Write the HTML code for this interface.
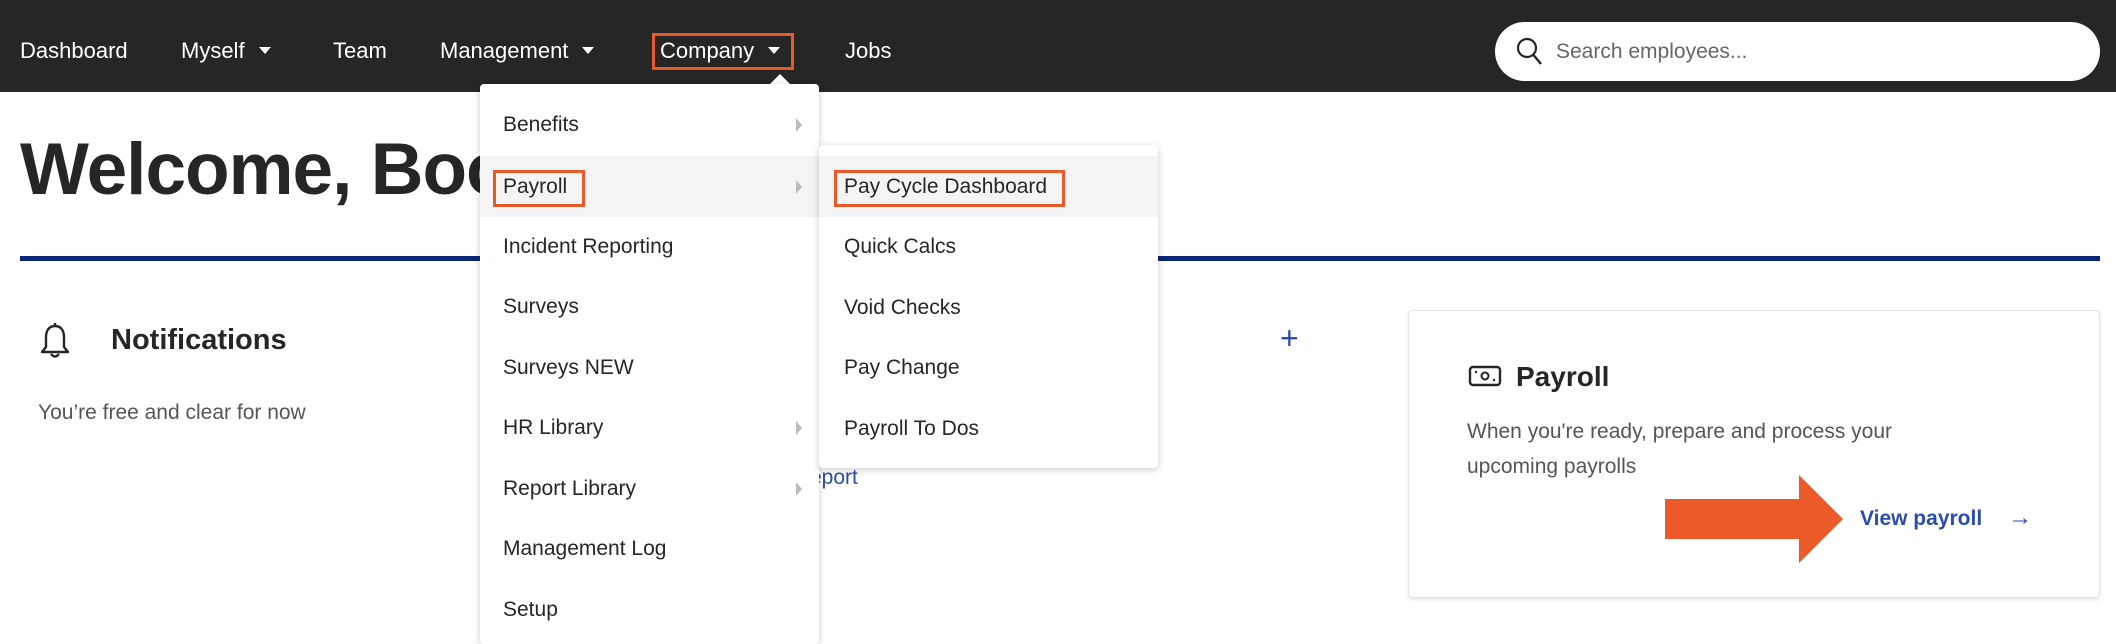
<!DOCTYPE html>
<html><head><meta charset="utf-8">
<style>
*{margin:0;padding:0;box-sizing:border-box}
body{width:2116px;height:628px;overflow:hidden;background:#fff;font-family:"Liberation Sans",sans-serif;color:#262626;position:relative}
.abs{position:absolute;white-space:nowrap}
.nav{position:absolute;left:0;top:0;width:2116px;height:92px;background:#262626}
.ni{position:absolute;top:36px;color:#fff;font-size:22px;line-height:30px}
.caret{display:inline-block;width:0;height:0;border-left:6px solid transparent;border-right:6px solid transparent;border-top:7px solid #fff;vertical-align:middle;margin-left:14px;position:relative;top:-2px}
.search{position:absolute;left:1495px;top:22px;width:605px;height:59px;background:#fff;border-radius:30px}
.menu{position:absolute;background:#fff;box-shadow:0 2px 8px rgba(0,0,0,.2);border-radius:4px}
.mi{position:absolute;left:0;right:0;height:61px;font-size:21px;line-height:61px;padding-left:23px;color:#262626}
.chev{position:absolute;right:17px;top:24px;width:0;height:0;border-top:7px solid transparent;border-bottom:7px solid transparent;border-left:6px solid #bbb}
.box{position:absolute;border:3px solid #e85a2a}
</style></head><body>
<div class="nav"></div>
<div class="ni" style="left:20px">Dashboard</div>
<div class="ni" style="left:181px">Myself<span class="caret"></span></div>
<div class="ni" style="left:333px">Team</div>
<div class="ni" style="left:440px">Management<span class="caret"></span></div>
<div class="ni" style="left:660px">Company<span class="caret"></span></div>
<div class="box" style="left:652px;top:33px;width:142px;height:37px"></div>
<div class="ni" style="left:845px">Jobs</div>
<div class="search">
<svg class="abs" style="left:20px;top:14px" width="30" height="32" viewBox="0 0 30 32"><circle cx="12" cy="12" r="9" fill="none" stroke="#262626" stroke-width="2.2"/><path d="M18.5 19 L26 28" stroke="#262626" stroke-width="2.4"/></svg>
<div class="abs" style="left:61px;top:18px;font-size:21px;color:#666">Search employees...</div>
</div>

<div class="abs" style="left:20px;top:128px;font-size:73px;font-weight:bold;letter-spacing:-1px;color:#262626">Welcome, Boo</div>
<div class="abs" style="left:20px;top:256px;width:2080px;height:5px;background:#0a2678"></div>

<svg class="abs" style="left:38px;top:322px" width="34" height="40" viewBox="0 0 34 40"><path d="M17 4 C10 4 8 10 8 15 V25 L4 30 H30 L26 25 V15 C26 10 24 4 17 4 Z" fill="none" stroke="#262626" stroke-width="2.4" stroke-linejoin="round"/><path d="M13 32 Q17 37 21 32" fill="none" stroke="#262626" stroke-width="2.4"/><path d="M17 1V4" stroke="#262626" stroke-width="2.4"/></svg>
<div class="abs" style="left:111px;top:324px;font-size:29px;font-weight:bold">Notifications</div>
<div class="abs" style="left:38px;top:401px;font-size:21px;color:#555">You’re free and clear for now</div>
<div class="abs" style="left:1280px;top:320px;font-size:32px;color:#2a4bb0">+</div>
<div class="abs" style="left:810px;top:466px;font-size:21px;color:#2a4bb0">eport</div>

<div class="abs" style="left:1408px;top:310px;width:692px;height:288px;border:1px solid #e3e3e3;border-radius:4px;box-shadow:0 2px 4px rgba(0,0,0,.1)"></div>
<svg class="abs" style="left:1468px;top:364px" width="34" height="24" viewBox="0 0 34 24"><rect x="2" y="3" width="30" height="18" rx="3" fill="none" stroke="#262626" stroke-width="2.4"/><circle cx="17" cy="12" r="3.5" fill="none" stroke="#262626" stroke-width="2"/><circle cx="8" cy="8" r="1.2" fill="#262626"/><circle cx="26" cy="16" r="1.2" fill="#262626"/></svg>
<div class="abs" style="left:1516px;top:361px;font-size:28px;font-weight:bold">Payroll</div>
<div class="abs" style="left:1467px;top:414px;font-size:21px;line-height:35px;color:#555">When you're ready, prepare and process your<br>upcoming payrolls</div>
<svg class="abs" style="left:1665px;top:474px" width="180" height="90" viewBox="0 0 180 90"><path d="M0 25 H134 V1 L178 45 L134 89 V65 H0 Z" fill="#ec5a2a"/></svg>
<div class="abs" style="left:1860px;top:507px;font-size:21px;font-weight:bold;color:#2a4bb0">View payroll</div>
<div class="abs" style="left:2008px;top:504px;font-size:24px;color:#2a4bb0">→</div>

<!-- dropdown 1 -->
<div class="abs" style="left:770px;top:74px;width:0;height:0;border-left:10px solid transparent;border-right:10px solid transparent;border-bottom:10px solid #fff"></div>
<div class="menu" style="left:480px;top:84px;width:339px;height:560px">
<div class="mi" style="top:10px">Benefits<span class="chev"></span></div>
<div class="mi" style="top:72px;background:#f4f4f4">Payroll<span class="chev"></span></div>
<div class="mi" style="top:132px">Incident Reporting</div>
<div class="mi" style="top:192px">Surveys</div>
<div class="mi" style="top:253px">Surveys NEW</div>
<div class="mi" style="top:313px">HR Library<span class="chev"></span></div>
<div class="mi" style="top:374px">Report Library<span class="chev"></span></div>
<div class="mi" style="top:434px">Management Log</div>
<div class="mi" style="top:495px">Setup</div>
</div>
<div class="box" style="left:493px;top:170px;width:92px;height:37px"></div>

<!-- dropdown 2 -->
<div class="menu" style="left:819px;top:145px;width:339px;height:323px">
<div class="mi" style="top:11px;background:#f4f4f4;padding-left:25px">Pay Cycle Dashboard</div>
<div class="mi" style="top:71px;padding-left:25px">Quick Calcs</div>
<div class="mi" style="top:132px;padding-left:25px">Void Checks</div>
<div class="mi" style="top:192px;padding-left:25px">Pay Change</div>
<div class="mi" style="top:253px;padding-left:25px">Payroll To Dos</div>
</div>
<div class="box" style="left:834px;top:170px;width:231px;height:37px"></div>
</body></html>
